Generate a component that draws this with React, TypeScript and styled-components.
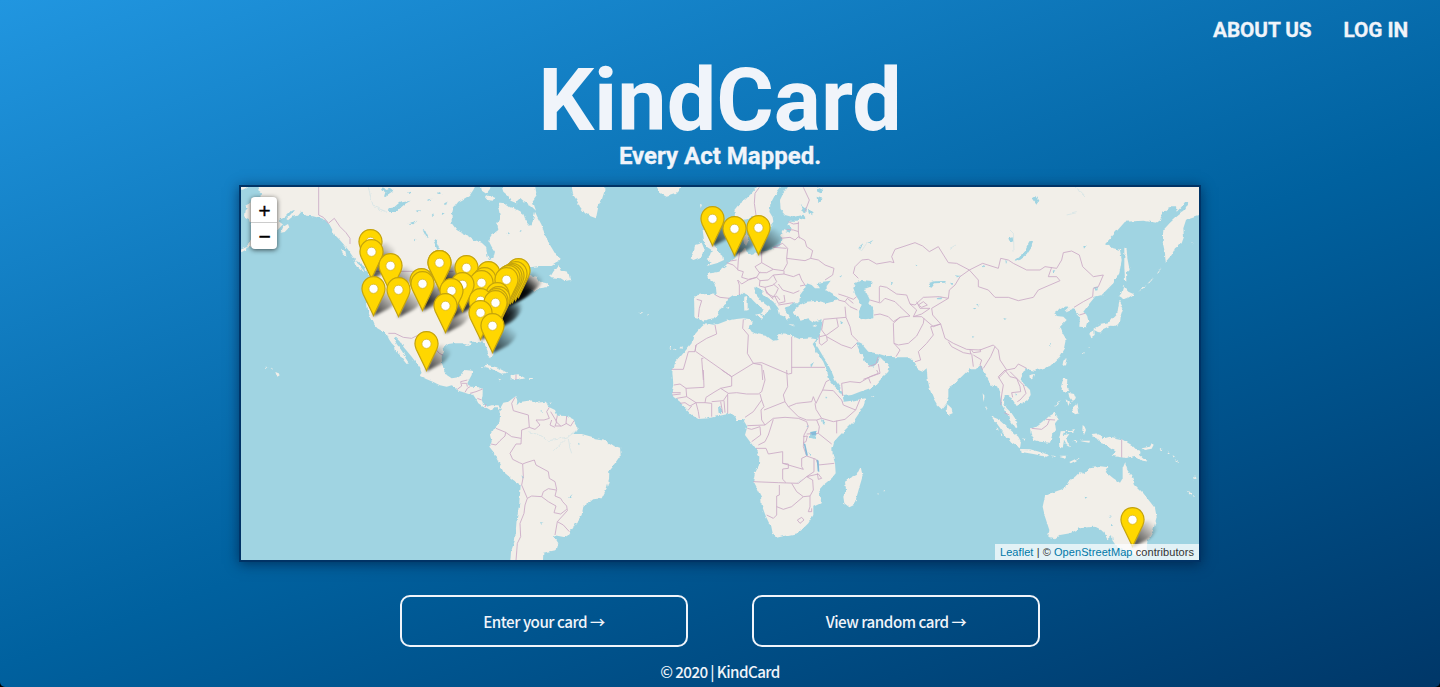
import React from 'react';
import styled, { createGlobalStyle } from 'styled-components';

const GlobalStyle = createGlobalStyle`
  * { box-sizing: border-box; }
  html, body { margin: 0; background: #000; }
`;

const Page = styled.div`
  height: 687px;
  overflow: hidden;
  display: flex;
  flex-direction: column;
  align-items: center;
  border-radius: 0 0 5px 5px;
  color: #f0f4fa;
  font-family: Roboto, sans-serif;
  background: linear-gradient(160deg, #2196e0 0%, #00619f 55%, #003768 100%);
`;

const Nav = styled.nav`
  align-self: stretch;
  height: 60px;
  display: flex;
  justify-content: flex-end;
  align-items: center;
  gap: 32px;
  padding: 0 32px 1px;
`;

const NavLink = styled.a`
  font-size: 20.8px;
  font-weight: 700;
  line-height: 24px;
  letter-spacing: -0.1px;
  -webkit-text-stroke: 0.3px #f0f4fa;
  white-space: nowrap;
`;

const Title = styled.h1`
  margin: 0;
  font-size: 88px;
  line-height: 80px;
  font-weight: 700;
`;

const Tagline = styled.h2`
  margin: 0;
  height: 45px;
  padding-top: 2px;
  font-size: 24px;
  line-height: 28px;
  font-weight: 700;
  -webkit-text-stroke: 0.3px #f0f4fa;
`;

const MapFrame = styled.section`
  position: relative;
  flex: none;
  width: 962px;
  height: 377px;
  border: 2px solid #003366;
  overflow: hidden;
  background: #a0d4e2;
`;

const MapShadow = styled.div`
  flex: none;
  box-shadow: 0 2px 12px rgba(0, 20, 50, 0.6);
`;

const MapCanvas = styled.svg`
  display: block;
  width: 958px;
  height: 373px;
`;

const Pin = styled.svg<{ $x: number; $y: number }>`
  position: absolute;
  left: ${(p) => p.$x}px;
  top: ${(p) => p.$y}px;
  width: 50px;
  height: 46px;
`;

const ZoomControl = styled.div`
  position: absolute;
  left: 10px;
  top: 10px;
  width: 26px;
  border-radius: 4px;
  background: #fff;
  box-shadow: 0 1px 5px rgba(0, 0, 0, 0.65);
`;

const ZoomButton = styled.div<{ $divider?: boolean }>`
  height: 26px;
  display: flex;
  align-items: center;
  justify-content: center;
  padding: 2px 0 0 1px;
  border-bottom: ${(p) => (p.$divider ? '1px solid #ccc' : 'none')};
  color: #000;
  font: 16px/24px 'DejaVu Sans', sans-serif;
  -webkit-text-stroke: 0.5px #000;
`;

const Attribution = styled.div`
  position: absolute;
  right: 0;
  bottom: 0;
  height: 16px;
  padding: 0 5px;
  background: rgba(255, 255, 255, 0.7);
  color: #333;
  font: 11px/16px 'Liberation Sans', Arial, sans-serif;
  letter-spacing: 0.07px;
  white-space: nowrap;
`;

const MapLink = styled.a`
  color: #0078a8;
`;

const Actions = styled.div`
  display: flex;
  gap: 64px;
  margin-top: 33px;
`;

const CardButton = styled.button`
  width: 288px;
  height: 52px;
  padding: 0 0 1px;
  border: 2px solid #f0f4fa;
  border-radius: 10px;
  background: transparent;
  color: #f0f4fa;
  font: 500 15.2px/24px 'Noto Sans CJK JP', sans-serif;
  letter-spacing: -0.48px;
`;

const Footer = styled.footer`
  margin-top: 12px;
  font: 500 15.2px/24px 'Noto Sans CJK JP', sans-serif;
  letter-spacing: -0.6px;
`;

/* Map sheets: each holds the origin of a survey sheet in map units (3 per pixel). */
const sheets: Record<string, [number, number]> = {
  W: [-9, -12],
  A: [-3, -21],
  C: [387, 399],
  E: [957, -21],
  S: [1917, -21],
  B: [597, 549],
  F: [1257, 549],
  O: [2097, 549],
};

/* "A 1,2 3,4 C 5,6" -> an SVG path; a letter switches the sheet the points belong to. */
const trace = (src: string, closed = true) => {
  let origin = sheets.A;
  const pts: string[] = [];
  src.trim().split(/\s+/).forEach((t) => {
    if (sheets[t]) {
      origin = sheets[t];
      return;
    }
    const [x, y] = t.split(',').map(Number);
    pts.push(`${x + origin[0]} ${y + origin[1]}`);
  });
  return 'M' + pts.join('L') + (closed ? 'Z' : '');
};

const land = [
  // North America
  `W 64,0 62,20 72,28 70,45 40,45 36,60 22,68 30,75 20,85 18,100 32,108 40,130 60,145 45,165 25,195 40,190 60,175 100,160 118,142 136,122 122,112 140,103 150,93 158,84 168,80 160,92 145,108 150,112 165,100 180,98 190,86 205,98 225,100 245,105 262,112 275,125 283,140 290,155 305,170 318,185
   A 325,210 335,225 345,240 360,250 375,262 383,280 390,290 388,310 383,335 380,360 383,385 388,405 400,430 412,445 425,452 440,462 447,478 455,490 465,500 468,515 480,525 490,540 500,552 507,550 497,535 490,520 482,508 470,492 462,475 468,470 480,482 490,500 500,512 515,530 530,550 540,565 545,580
   C 152,160 150,168 170,178 190,186 210,196 230,200 245,196 258,203 265,212 280,217 295,222 310,225 318,237 325,250 340,260 352,265 365,272 372,262 385,262 388,275 396,268 385,256 365,256 350,260 340,252 335,240 338,222 338,207 325,202 305,200 295,195 292,190 297,180 305,165 307,152 285,150 275,165 265,172 245,175 230,165 222,150 216,130 215,110 222,95 218,85 235,72 250,70 275,70 290,75 300,72 310,72 295,65 320,65 340,68 348,80 355,100 362,115 370,108 368,90 360,75 357,60 365,45
   A 760,450 780,430 795,415 810,400 800,385 805,370 815,355 820,340 840,335 865,325 880,335 900,325 930,320 920,310 900,305 890,290 870,285 870,262 900,258 935,258 955,245 962,236 948,225 930,195 915,165 905,135 892,110 885,95 878,125 870,138 858,125 850,100 830,88 810,82 795,70 780,68 775,85 780,110 772,130 775,150 755,165 745,180 755,200 765,215 760,235 748,240 742,225 738,200 725,188 700,180 680,165 665,158 650,150 635,130 635,105 640,85 655,65 675,55 690,45 700,30 710,10`,
  `A 718,10 722,30 740,42 750,30 752,10`,
  `A 782,10 790,35 805,48 812,62 830,70 838,55 850,65 870,75 888,92 878,62 890,45 884,10`,
  `A 735,52 748,44 765,52 758,62 742,60`,
  `A 930,292 940,275 955,255 962,272 985,278 991,300 975,303 962,295`,
  `A 340,240 355,252 374,276 362,270 346,256`,
  `A 303,206 316,214 320,230 308,220`,
  `A 122,158 130,140 144,132 148,142 134,156`,
  `W 8,200 26,192 24,200 10,208`,
  `W 0,0 22,0 26,14 14,20 0,16`,
  `A 106,573 114,576 119,586 112,590`, `A 92,566 98,567 96,570`, `A 76,560 82,561 80,564`,
  // Caribbean
  `C 330,140 350,134 380,142 412,158 395,161 365,147 345,142`,
  `C 425,165 445,163 466,175 440,181 425,176`,
  `C 384,176 397,178 392,181`, `C 477,176 489,176 488,180 478,180`, `C 538,248 543,248 542,253`,
  // Greenland and Iceland
  `E 33,10 40,45 50,60 60,80 75,100 90,108 108,115 112,95 115,80 125,60 133,35 133,10`,
  `E 285,10 300,40 320,50 345,42 362,25 368,10`,
  // South America
  `B 178,120 190,98 205,95 225,80 232,92 230,106 240,96 265,92 290,98 318,95 325,110 345,120 352,137 380,138 400,148 413,175 400,192 425,192 455,200 465,208 495,212 515,225 540,233 542,255 525,280 508,300 507,330 500,355 485,385 460,388 430,410 425,435 405,465 385,495 375,502 340,495 355,520 350,540 310,548 308,590 210,590 213,545 225,510 230,450 238,400 242,345 220,330 190,305 175,275 160,245 148,230 155,215 150,195 160,178 178,160 180,140`,
  // Scandinavia
  `E 600,10 575,40 555,60 535,75 523,90 525,110 540,122 560,118 578,108 590,125 598,150 608,168 622,160 625,145 640,125 638,112 628,95 632,70 645,45 662,22 664,10`,
  // Eurasia
  `E 692,10 670,40 660,60 662,90 675,105 700,112 730,104 740,112 712,122 690,122 682,135 692,142 690,158 668,150 660,165 668,180 655,200 640,205 620,212 600,215 575,225 560,215 552,190 548,170 560,160 568,175 560,195 545,215 535,218 525,235 505,248 495,258 485,265 478,275 462,278 450,280 440,282 445,295 460,305 468,320 470,345 440,342 410,345 402,355 403,385 403,410 418,415 430,425 445,418 465,415 475,405 480,385 500,370 505,355 520,345 540,345 552,335 565,345 580,362 600,382 612,390 600,405 612,408 625,392 632,385 615,372 600,360 585,340 583,325 590,320 600,330 620,350 640,365 655,385 660,405 675,410 680,420 690,410 680,395 672,380 690,375 700,370 718,370 720,345 735,325 740,310 755,315 765,325 780,325 770,310 790,305 812,302 800,318 800,330 820,342 835,360 800,370 770,362 740,365 725,372 705,388 700,395 710,410 722,422 745,415 760,425 780,420 788,418 785,440 780,460 775,478 765,490 775,505 790,530 800,545 815,575
   F 525,30 540,50 550,78 575,75 600,65 630,55 650,42 665,25 685,5
   S 28,562 20,550 5,540 0,530 E 955,545 940,560 925,555 915,545 900,515 888,490 893,486 905,492 925,515 950,520 985,530
   S 45,532 90,532 105,548 115,570 128,575 140,565 143,600
   F 810,60 820,85 832,105 845,118 860,100 865,80 865,55 880,45 900,25 920,5
   S 262,578 268,568 290,568 305,555 310,575
   O 145,30 152,48 165,45 172,50 180,75 185,100 195,115 203,135 215,155 228,175 232,172 225,145 215,130 200,115 192,100 193,80 200,75 215,85 230,108 245,100 262,90 272,75 270,60 250,40 240,25 250,5
   S 440,568 465,572 510,558 540,530 555,505 560,480 548,460 540,440 560,420 550,410 530,408 525,395 550,380 560,375 565,385 555,395 580,385 592,390 590,400 600,410 598,440 620,442 625,425 620,405 610,395 625,375 645,350 665,345 700,310 718,280 725,240 720,210 700,205 675,193 700,165 735,125 790,122 830,128 845,118 840,108 850,98 870,82 888,82 890,95 905,80 915,66 928,66 915,90 888,112 870,128 850,150 848,185 855,220 857,245 875,225 885,205 905,190 912,170 910,145 918,120 925,115 970,100 970,0`,
  // British Isles
  `E 428,150 440,150 452,168 460,190 475,215 490,228 492,240 470,250 440,258 455,245 440,238 450,225 455,210 440,200 432,180`,
  `E 405,195 425,188 432,205 425,230 400,240 392,235 402,215`,
  // Mediterranean islands
  `E 553,350 561,348 563,365 563,390 553,392 552,372`, `E 585,404 608,400 606,416`,
  `E 682,432 705,434 700,438`, `E 757,438 772,432 768,440`, `E 500,384 508,380 506,386`,
  `E 235,398 245,396 244,401`, `E 262,404 268,407 264,408`, `E 420,72 426,74 422,84`,
  `E 328,503 336,500 336,506`, `E 342,506 350,508 345,511`, `E 358,505 364,498 366,506`,
  // Africa
  `E 425,440 437,430 460,434 475,432 500,422 530,417 550,415 572,418 575,428 568,445 575,455 590,462 620,468 640,482 652,480 655,462 690,465 720,478 750,475 770,478 758,492 770,515 790,545 800,570
   F 508,30 520,45 535,60 548,80 552,95 575,92 617,85 612,105 600,125 580,155 555,180 535,200 522,215 517,235 518,255 525,280 527,310 515,325 490,345 477,360 483,385 482,400 460,410 460,435 445,460 425,480 410,490 385,495 350,503 335,490 330,465 318,440 305,405 303,380 290,355 280,335 285,310 297,285 298,260 285,235 270,215 255,195 262,170 250,150 230,150 215,130 175,138 145,145 115,147 95,135 75,115 60,95 40,80 35,65 40,45 37,5
   E 345,550 370,520 395,490 400,468`,
  `F 602,290 608,318 600,345 590,380 582,405 568,412 553,400 550,380 558,360 555,335 575,322 590,315`,
  `F 862,103 875,115 878,130 865,135 860,120`,
  `F 652,370 657,371 654,374`, `F 670,361 675,360 672,365`, `F 636,78 643,78 640,81`,
  // East Asia
  `S 733,203 740,205 742,235 749,270 741,278 742,305 735,300 733,260`,
  `S 730,318 745,335 762,343 742,355 728,358 716,350 724,340`,
  `S 718,362 730,385 722,410 720,430 705,438 690,437 670,447 655,457 638,448 660,435 685,430 700,412 712,400 715,380`,
  `S 628,458 643,450 644,468 634,475`, `S 655,452 668,450 660,458`,
  `S 550,542 560,535 555,556 547,558`, `S 448,586 465,582 460,597 450,598`,
  `S 775,335 790,322 800,315 788,327`, `S 805,308 822,292 812,305`, `S 830,282 845,262 836,278`, `S 934,186 940,190 938,193`,
  `S 608,522 615,515 612,522`, `S 622,506 628,500 626,506`,
  // South-east Asia
  `O 370,25 382,28 380,50 388,62 372,65 363,50`, `O 385,68 402,72 408,88 395,92 388,82`, `O 380,88 390,95 385,108`,
  `O 392,118 412,100 418,130 405,133`, `O 342,112 362,90 354,104`,
  `O 270,175 290,170 310,155 325,140 345,128 356,146 345,160 348,180 335,200 330,218 300,215 280,210 272,190`,
  `O 152,138 175,148 205,175 235,200 243,215 240,235 215,220 195,195 170,160`,
  `O 243,237 270,238 300,246 328,255 320,260 280,252 245,246`, `O 332,256 350,260 345,263`, `O 355,260 382,260 378,266`,
  `O 388,276 405,268 422,262 408,272 392,280`, `O 362,184 385,182 405,177 400,185 372,187 368,195 388,192 378,206 390,232 380,226 372,212 368,233 358,230 357,210`,
  `O 428,165 434,170 438,180 432,195 427,182`, `O 418,212 450,212 448,218 430,215`, `O 400,213 412,212 410,218`,
  `O 455,192 480,190 487,200 484,207 510,200 545,208 575,225 590,240 602,242 600,255 625,275 605,272 585,258 555,264 545,262 515,257 528,246 515,235 500,225 480,218 478,210 460,200`,
  `O 605,235 630,230 635,220 641,224 635,236 612,240`, `O 658,232 668,240 662,240`, `O 680,244 690,252 684,252`, `O 698,255 706,262 700,262`, `O 704,268 722,276 712,277`,
  `O 740,362 752,368 766,382 750,374`, `O 762,316 770,325 764,328`, `O 128,70 134,78 130,96`, `O 138,108 144,120 140,124`,
  `O 170,172 176,178 172,180`, `O 182,188 190,198 184,198`, `O 247,205 255,207 250,212`,
  // Australia
  `O 315,378 345,365 375,355 385,335 405,320 420,305 435,312 450,292 475,288 505,292 497,306 520,325 540,338 548,325 548,295 555,278 562,300 575,318 585,345 610,370 630,395 645,415 650,440 640,480 622,515 620,540 600,560 560,545 530,530 518,512 516,495 502,508 490,485 460,470 420,475 390,490 360,495 345,505 325,500 328,480 315,440 308,410`,
];

const lakes = [
  `A 445,85 462,82 478,68 512,62 495,72 480,85 470,96 452,96`, `A 425,22 440,30 452,25 460,32 446,42 432,50 436,36 420,30`,
  `A 502,130 518,126 532,122 520,133`, `A 548,150 556,153 566,175 558,170`, `A 580,180 588,178 600,205 592,210`, `A 575,105 580,100 582,112`,
  `A 520,180 526,176 524,184`, `A 590,40 600,36 604,44`, `A 560,60 574,56 570,62`, `A 612,70 622,66 618,76`, `A 500,38 515,34 510,40`,
  `A 530,92 540,90 536,97`, `A 605,98 614,100 606,105`, `A 850,98 858,102 852,108`, `A 800,160 808,162 802,166`, `A 838,150 846,152 840,156`,
  `A 30,22 60,22 58,30 40,28`, `A 670,270 700,262 720,272 700,285`,
  `E 880,325 885,310 905,300 935,303 932,320 912,327 920,340 930,360 925,370 940,390 940,415 915,418 898,410 897,390 905,375 890,350`,
  `E 722,72 738,84 736,100 724,96 728,84`, `E 744,84 758,98 756,108 746,100`, `E 770,50 788,56 782,62 772,66`, `E 772,22 790,30 782,40 770,34`, `E 895,205 902,196 910,190 902,206`, `E 920,190 940,180 932,188`,
  `E 750,555 762,545 756,558`, `E 838,290 848,284 842,292`, `E 840,422 850,428 844,432`,
  `S 403,242 420,240 440,225 454,203 459,182 448,184 435,210 418,232`, `S 147,320 148,308 165,304 197,303 196,308 165,310 155,323`,
  `S 170,354 188,352 184,358 172,358`, `S 30,305 42,308 34,312`, `S 225,286 242,288 232,292`, `S 210,308 222,310 216,316`, `S 305,254 316,258 308,262`,
  `S 278,384 290,384 284,388`, `S 288,376 300,374 294,380`, `S 370,414 380,416 374,420`, `S 276,468 283,470 278,474`, `S 455,55 466,48 475,62 468,72`, `S 385,175 398,172 400,185 388,182`, `S 610,198 620,196 612,206`, `S 518,272 526,270 520,280`, `S 640,322 652,320 648,330`, `S 376,240 382,244 378,252`, `S 510,492 516,494 512,500`, `S 106,254 112,256 108,260`,
  `F 450,186 470,182 470,196 464,207 450,203`, `F 496,80 502,82 498,86`, `F 486,148 492,150 494,164 489,162`, `F 440,168 446,166 442,176`, `F 174,112 182,112 184,130 176,126`, `F 446,246 456,256 452,258`,
  `B 300,456 310,458 304,464`, `B 384,384 398,372 390,384`, `B 244,316 252,322 248,326`, `B 400,460 408,458 400,472`, `B 414,218 420,222 416,225`, `B 302,120 306,122 303,127`,
  `O 506,436 512,438 508,444`, `O 512,462 520,464 514,470`, `O 434,380 442,382 436,386`, `O 226,70 232,74 228,78`,
];

/* The narrow African rift lakes, drawn over the borders that run through them. */
const riftLakes = [`F 431,220 436,222 444,257 438,256`, `F 470,268 476,272 478,306 473,304`, `F 452,187 468,184 468,194 456,196`];

const borders = [
  `A 236,10 236,105 250,112 265,130 283,115 300,140 318,158 330,175 330,192`, `A 395,274 560,274 640,274`,
  `A 445,460 465,460 490,472 515,475 535,465 550,475`, `A 585,505 598,520 610,526`,
  `C 262,208 275,198 272,185 292,180`, `C 285,217 292,205 300,200`, `C 300,220 318,215 338,207`, `C 322,235 335,240`, `C 345,262 348,252`, `C 438,164 438,180`, `C 275,190 290,190 292,200`,
  // South America
  `B 225,82 215,100 220,122 240,128 265,135 268,172 285,178 300,165 288,150 312,150 328,145 320,125 328,112`, `B 268,172 245,180 243,222 228,222 210,250 218,268 238,278 248,282 258,278 283,270 288,285 325,305 328,325 345,335 350,358 345,378 362,385 368,395 380,408 382,422 352,455 345,495`,
  `B 168,175 197,187 195,198 180,212 168,225 153,222`, `B 197,187 215,200 243,205`, `B 332,125 350,155 345,168 365,168 380,160`, `B 335,150 330,165 345,172`, `B 380,138 378,160 392,168 402,152`, `B 352,137 348,155 362,168`,
  `B 248,282 250,320 245,345 262,385 255,405 252,430 240,460 242,500 232,520 228,572`, `B 262,385 275,378 305,380 310,365 325,356 348,360`, `B 305,380 325,395 348,408 342,428 362,432 380,418`, `B 352,455 370,465 388,485`,
  // Europe
  `E 598,22 585,40 583,70 588,105`, `E 730,22 748,60 735,95`, `E 715,125 715,155 718,175`, `E 685,125 700,132 716,130`, `E 680,148 700,150 716,155`, `E 662,175 690,172 705,180 715,170 735,182 740,200 758,212 752,235 735,242 680,235 683,205 668,190`, `E 668,190 640,202 680,205`, `E 605,215 605,248 640,268 670,272 682,250 680,235`, `E 585,260 605,248`, `E 585,260 598,278 620,278 640,268`,
  `E 540,215 535,240 533,270 550,275 545,292 565,298 590,292 600,275`, `E 500,248 520,255 533,268`, `E 510,243 530,240`, `E 533,300 545,312 565,300 590,292 600,302 625,300 640,285 672,282 672,272`, `E 538,345 538,315 533,300`, `E 600,302 598,318 615,322 640,315 650,305 640,285`, `E 672,282 700,290 718,282 725,300 735,315 720,318`, `E 655,312 668,330 700,340 718,332`, `E 615,322 620,340 640,350 648,340 655,325 640,312`, `E 645,350 655,370 675,365 672,345`, `E 655,375 700,368`, `E 615,328 628,345 640,358`, `E 635,352 650,348 660,360`,
  `E 752,235 775,240 795,255 822,265 818,285 795,300`, `E 410,358 425,362 418,385 415,412`, `E 466,345 480,352 508,355`, `E 835,342 860,350 880,358 890,350`, `E 835,360 855,365 870,380 892,390`, `E 855,365 862,355 880,370`, `E 855,380 858,412 790,418`,
  // Central Asia
  `E 895,295 880,280 885,260 905,240 925,238 950,252 990,245 S 42,248 35,230 45,208 75,198 105,188 128,198 148,215 175,200 205,248 230,250 268,270`, `S 268,270 240,290 225,315 208,330 205,355 178,350 130,352 105,375 90,372 80,345 50,342 20,322 0,318 E 958,322 958,368 930,360`, `E 942,405 960,402 985,410 S 40,425 60,412 90,408 60,380 45,365 15,355 0,370`, `S 90,372 110,390 100,410 125,402 150,385 120,385 110,365`, `S 115,375 130,365 142,375 125,382 115,375`, `S 205,355 155,385 158,405 182,432 160,440 125,410 100,410`, `S 60,412 40,430 42,490 55,495 85,490 110,468 130,430 132,415`, `S 42,490 60,510 48,530`, `S 182,432 152,440 160,465 140,490 115,515 122,540 105,545`, `S 182,432 195,475 220,490 260,508 300,510 340,495 355,510 360,540`, `S 205,485 215,500 250,518 272,522 270,508`, `S 275,510 280,518 302,515 300,507`, `S 275,520 280,560`, `S 280,525 305,540 300,555 308,570`, `S 345,500 332,530 310,565`, `S 360,540 380,570 405,565 415,552 440,565`, `S 380,570 355,595`,
  `S 268,270 308,250 355,265 362,235 385,240 400,250 440,270 480,270 495,260 530,265 545,240 550,218 575,213 598,225 608,260 640,290 670,285 655,320 640,325 638,350 610,365 582,382`, `S 268,270 295,300 295,320 325,330 345,352 385,352 415,362 460,352 475,330 540,302 530,290 505,290 515,262`, `S 598,405 615,400`,
  // Middle East
  `E 790,420 785,450 800,470 845,495 875,505 890,490`, `E 830,415 835,440 800,465 780,470`, `E 858,412 870,440 875,465 895,485`, `E 800,470 802,482 785,495 778,490 778,465`, `F 548,78 545,40 570,35 600,38 630,20 655,10 650,0`, `F 625,22 632,40`, `E 955,530 948,552 925,560`, `E 955,552 960,580 910,598`,
  // Africa
  `E 465,435 470,462 440,475 408,495 405,515 385,515 378,540 370,568 335,568`, `E 408,515 515,590 580,550 605,555 608,600`, `E 408,495 405,515`, `E 430,535 425,535 430,600`, `E 550,418 548,445 565,465 562,520 580,550`, `E 580,550 605,548 685,582 695,580 695,470`, `E 695,562 795,562`,
  `F 130,0 132,52 78,55 60,42 42,45`, `F 37,68 62,68`, `F 37,75 62,72`, `F 78,55 80,80 50,85`, `F 60,100 75,98 90,108 108,98 80,80`, `F 85,120 95,108`, `F 108,98 115,125 118,145`, `F 108,98 135,98 138,82 165,65 182,55 215,48 215,20 185,0`, `F 135,98 155,100 155,140`, `F 155,95 190,92 205,70 182,55`, `F 182,95 188,130`, `F 192,92 195,128`, `F 203,75 203,130`, `F 205,70 230,68 260,72 295,72 305,65 315,30 310,0`, `F 300,72 305,90 280,125 255,142`, `F 305,90 312,110 303,120 305,150 315,165 262,167`, `F 312,120 375,95 370,75 383,50 380,0`, `F 375,95 385,110 410,100 455,95 460,80 468,100 480,75 488,60 498,35 508,30`, `F 385,110 415,140 440,150 470,150 485,145 468,118 465,100`, `F 488,60 520,62 545,90 550,105 587,120 600,88`, `F 587,120 555,148 520,155 485,145`, `F 530,152 530,190`, `F 315,165 340,145 375,142 415,145 440,155 445,170 432,195 430,230 440,258 425,265 425,290 430,298 368,280 368,245 325,252 318,235 288,235`, `F 262,175 275,178 300,170 302,195 275,215`, `F 340,148 325,195 315,215 295,225`, `F 470,150 478,170 475,190 515,222`, `F 440,192 475,190`, `F 430,200 442,198 438,215 430,218`, `F 440,258 468,268 475,285 523,280`, `F 280,335 355,338 415,340 440,320 475,312 485,325 475,328 472,310`, `F 368,280 385,282 385,295 368,297 368,328 378,338`, `F 358,345 358,375 350,378 350,435 340,445 320,435`, `F 350,410 370,418 395,410 430,380 450,378 460,360 458,330 440,320`, `F 395,340 410,365 430,380`, `F 450,378 450,410 445,425 455,425 455,415`, `F 412,450 425,442 432,450 420,460 412,450`, `F 462,265 462,305 440,320`,
  // South-east Asia
  `O 195,0 175,20 190,45 185,75 182,105`, `O 195,0 210,20 230,25 240,50 242,65 215,68 218,82`, `O 210,5 225,20 250,45 258,70 240,90 232,95`, `O 193,128 208,135`, `O 275,175 305,178 322,165 328,150`, `O 318,148 345,150`, `O 545,208 545,262`,
];

const rivers = [
  `B 265,185 300,195 325,212 355,208 385,200 410,182`, `B 385,205 390,235 395,250`, `B 375,208 340,245`, `A 385,22 400,80 440,95`, `S 560,105 590,98`, `S 585,22 600,32 615,48`, `S 390,150 400,160 402,215`, `S 210,205 228,195`, `E 920,190 905,212 895,205`, `F 412,338 425,328`,
];

/* Pin head centre and top edge, painted from north to south. */
const pinSites: [string, number, number][] = [
  ['E', 457, 78], ['E', 595, 105], ['E', 523, 108],
  ['A', 391, 148], ['A', 393, 178], ['A', 597, 210], ['A', 598, 210], ['A', 451, 220], ['A', 679, 226],
  ['A', 836, 235], ['A', 745, 243], ['A', 826, 243], ['A', 818, 248], ['A', 812, 252], ['A', 806, 256],
  ['A', 733, 262], ['A', 799, 262], ['A', 543, 265], ['A', 723, 270], ['A', 547, 273], ['A', 668, 275],
  ['A', 400, 289], ['A', 475, 291], ['A', 633, 295], ['A', 771, 307], ['A', 775, 318], ['A', 770, 323],
  ['A', 720, 325], ['A', 766, 331], ['A', 616, 338], ['A', 721, 361], ['A', 757, 400], ['A', 559, 453],
  ['O', 577, 412],
];

const pins = pinSites.map(([s, x, y]) => ({
  x: (x + sheets[s][0]) / 3 - 12.5,
  y: (y + sheets[s][1]) / 3,
}));

function WorldMap() {
  return (
    <MapCanvas viewBox="0 0 2874 1119" aria-label="World map">
      <defs>
        <filter id="coast" x="0" y="0" width="2874" height="1119" filterUnits="userSpaceOnUse">
          <feTurbulence type="fractalNoise" baseFrequency="0.06" numOctaves="3" seed="4" result="n" />
          <feDisplacementMap in="SourceGraphic" in2="n" scale="10" xChannelSelector="R" yChannelSelector="G" />
        </filter>
      </defs>
      <g filter="url(#coast)">
        <path d={land.map((s) => trace(s)).join('')} fill="#f2efe9" />
        <path d={lakes.map((s) => trace(s)).join('')} fill="#a0d4e2" />
        <path d={rivers.map((s) => trace(s, false)).join('')} fill="none" stroke="#cfe3e5" strokeWidth="2" />
      </g>
      <path d={borders.map((s) => trace(s, false)).join('')} fill="none" stroke="#cbaac6" strokeWidth="2.6" strokeLinejoin="round" />
      <path d={riftLakes.map((s) => trace(s)).join('')} fill="#86bbd9" />
    </MapCanvas>
  );
}

export default function App() {
  return (
    <>
      <GlobalStyle />
      <Page>
        <Nav>
          <NavLink>ABOUT US</NavLink>
          <NavLink>LOG IN</NavLink>
        </Nav>
        <Title>KindCard</Title>
        <Tagline>Every Act Mapped.</Tagline>
        <MapShadow>
          <MapFrame>
            <WorldMap />
            {pins.map((p, i) => (
              <Pin key={`s${i}`} $x={p.x} $y={p.y} viewBox="0 0 50 46">
                <defs>
                  <linearGradient id={`g${i}`} gradientUnits="userSpaceOnUse" x1="12" y1="40" x2="34" y2="16">
                    <stop offset="0" stopColor="#000" stopOpacity="0.8" />
                    <stop offset="0.5" stopColor="#000" stopOpacity="0.42" />
                    <stop offset="1" stopColor="#000" stopOpacity="0" />
                  </linearGradient>
                  <filter id={`b${i}`} x="-30%" y="-30%" width="160%" height="160%">
                    <feGaussianBlur stdDeviation="1.6" />
                  </filter>
                </defs>
                <path d="M12 40.5L19 22C23 13 31 11 36 15C40 20 34 29 27 33Z" fill={`url(#g${i})`} filter={`url(#b${i})`} />
              </Pin>
            ))}
            {pins.map((p, i) => (
              <Pin key={`p${i}`} $x={p.x} $y={p.y} viewBox="0 0 50 46">
                <path d="M12.5 39.6L2.2 18.2C-1.6 9.2 4.2 0.6 12.5 0.6S26.6 9.2 22.8 18.2Z" fill="#ffd700" stroke="#c4a30c" strokeWidth="1.2" />
                <circle cx="12.5" cy="12.8" r="4.6" fill="#fff" stroke="#d5b52a" strokeWidth="0.8" />
              </Pin>
            ))}
            <ZoomControl>
              <ZoomButton $divider>+</ZoomButton>
              <ZoomButton>−</ZoomButton>
            </ZoomControl>
            <Attribution>
              <MapLink>Leaflet</MapLink> | © <MapLink>OpenStreetMap</MapLink> contributors
            </Attribution>
          </MapFrame>
        </MapShadow>
        <Actions>
          <CardButton>Enter your card →</CardButton>
          <CardButton>View random card →</CardButton>
        </Actions>
        <Footer>© 2020 | KindCard</Footer>
      </Page>
    </>
  );
}
